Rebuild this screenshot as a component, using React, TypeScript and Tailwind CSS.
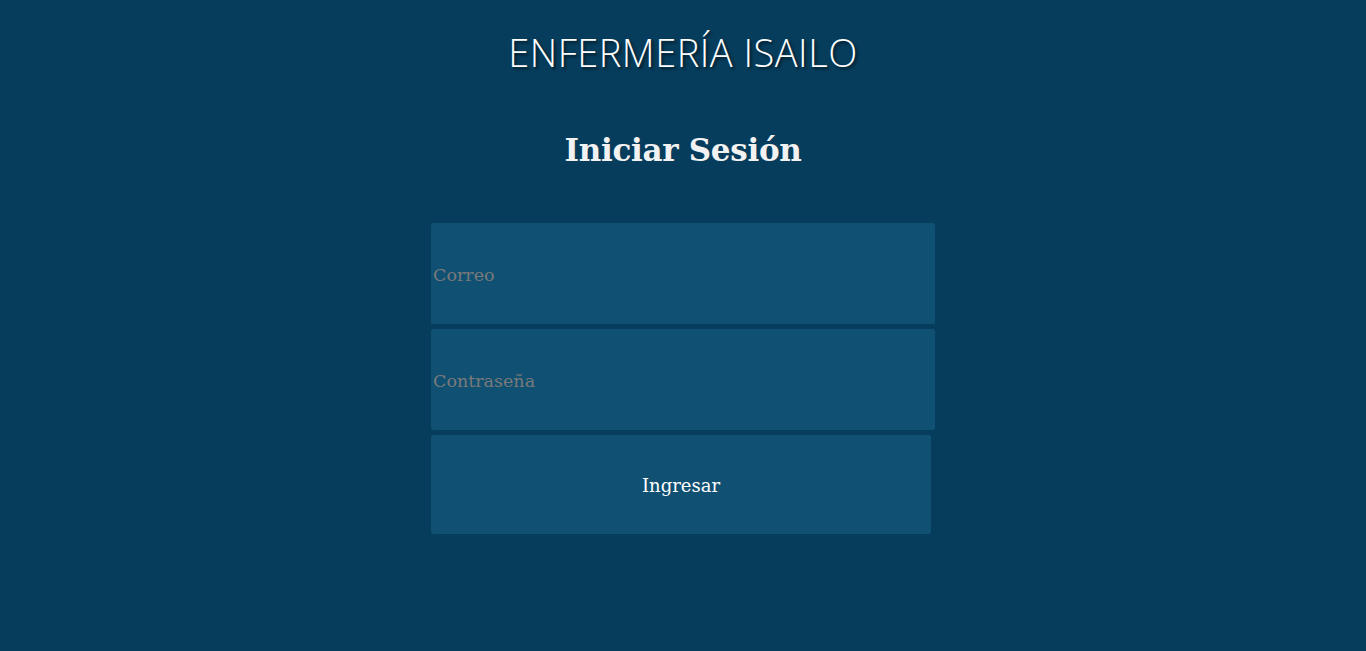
export default function App() {
  return (
    <div className="min-h-[651px] w-full bg-[#063d5c] flex flex-col items-center">
      <h1 className="mt-[26px] h-[52px] text-[38px] leading-[52px] font-light tracking-[0.5px] text-white font-['Open_Sans',sans-serif] [text-shadow:2px_2px_3px_rgba(0,0,0,0.6)]">
        ENFERMERÍA ISAILO
      </h1>
      <h2 className="mt-[50px] text-[31px] leading-[44px] font-bold text-[#f2f2f2] font-['DejaVu_Serif',serif] tracking-[-0.3px]">
        Iniciar Sesión
      </h2>
      <form className="mt-[51px] w-[504px] flex flex-col items-start gap-[5px] font-['DejaVu_Serif',serif]">
        <input
          type="email"
          placeholder="Correo"
          className="w-[504px] h-[101px] rounded-[2px] bg-[#105072] px-[2px] pt-[2px] text-[17.5px] text-white placeholder:text-[#7a7a7a] outline-none"
        />
        <input
          type="password"
          placeholder="Contraseña"
          className="w-[504px] h-[101px] rounded-[2px] bg-[#105072] px-[2px] pt-[2px] text-[17.5px] text-white placeholder:text-[#7a7a7a] outline-none"
        />
        <button
          type="button"
          className="w-[500px] h-[99px] rounded-[2px] bg-[#105072] pt-[2px] text-[18px] text-white"
        >
          Ingresar
        </button>
      </form>
    </div>
  );
}
